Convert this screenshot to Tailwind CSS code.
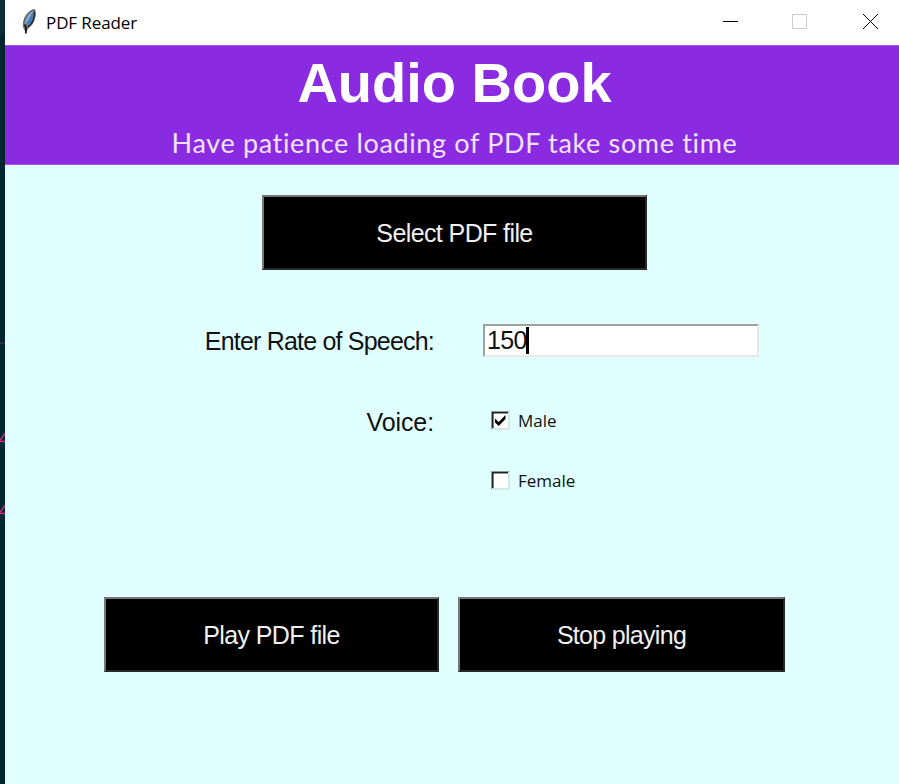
<!DOCTYPE html>
<html lang="en">
<head>
<meta charset="utf-8">
<title>PDF Reader</title>
<script src="https://cdn.jsdelivr.net/npm/@tailwindcss/browser@4"></script>
</head>
<body class="flex h-[784px] w-[899px] overflow-hidden bg-[#e0ffff] font-['Liberation_Sans',Arial,sans-serif] text-[#111]">
<aside class="h-full w-[5px] shrink-0 bg-[#00262f]">
  <svg class="block" width="5" height="784" viewBox="0 0 5 784" fill="none">
    <rect width="5" height="33" fill="#0b2f38"/>
    <path d="M0 343h5" stroke="#302a42" stroke-width="2"/>
    <path d="M5 433.500L0 440.500M0 441.500h5M5 505.500L0 512.500M0 513.500h5" stroke="#c5317c" stroke-width="1.500"/>
  </svg>
</aside>
<main class="flex h-full w-[894px] flex-col">
  <header class="flex h-[45px] shrink-0 items-center bg-white pl-4">
    <svg class="mb-[2px] shrink-0" width="18" height="28" viewBox="0 0 18 28">
      <path d="M13.500 1.500C9 2 4.500 6.500 3 12c-1 3.500-1 6 0 8.500L5 23.500l2-3.500c4-2 6.500-7 7.200-12 .4-3 .2-5-.7-6.500z" fill="#75716c" stroke="#4b4b4b" stroke-width=".7"/>
      <path d="M12.500 3C8 5 5 9.500 4.200 14L4 18C6.500 14 9 9 12.500 3z" fill="#79aee0"/>
      <path d="M13 4.500C9.500 8 7 13 5.300 18.500c4-2 7.500-7.500 7.700-14z" fill="#3d7fc9"/>
      <path d="M13.200 3.500c1 6-2 12.500-6.200 15.500" fill="none" stroke="#222" stroke-width="1.200"/>
      <path d="M3.600 16.500l1.500 3.500-.3 5.500" fill="none" stroke="#151515" stroke-width="1.800"/>
    </svg>
    <h1 class="ml-[7px] w-[600px] whitespace-nowrap font-['Open_Sans','Noto_Sans',sans-serif] text-[17px] leading-[24px] tracking-[-0.1px] text-black">PDF Reader</h1>
    <svg class="ml-auto shrink-0" width="180" height="45" viewBox="0 0 180 45" fill="none" shape-rendering="crispEdges">
      <path d="M4 21.500h15" stroke="#000"/>
      <rect x="73.500" y="14.500" width="14" height="14" stroke="#ccc"/>
      <path d="M144 14l15 15M159 14l-15 15" stroke="#000" shape-rendering="auto"/>
    </svg>
  </header>
  <section class="flex h-[120px] shrink-0 flex-col items-center border-y border-[#a354e5] bg-[#8a2be2] pl-[5px] text-white">
    <h2 class="mt-[5px] h-[64px] whitespace-nowrap text-[56px] leading-[64px] font-bold">Audio Book</h2>
    <p class="mt-[9px] whitespace-nowrap font-['Lato','Noto_Sans',sans-serif] text-[27px] leading-[38px] tracking-[0.65px] text-[#f0e2fb]">Have patience loading of PDF take some time</p>
  </section>
  <section class="flex flex-col pt-[30px]">
    <button class="ml-[257px] h-[75px] w-[385px] border-2 border-t-[#777] border-r-[#292929] border-b-[#292929] border-l-[#777] bg-black pt-[2px] text-[25px] tracking-[-0.6px] whitespace-nowrap text-[#f0f0f0]">Select PDF file</button>
    <div class="mt-[54px] grid grid-cols-[429px_276px] items-center gap-x-[49px]">
      <label for="rate" class="text-right text-[25px] leading-[32px] tracking-[-0.8px] whitespace-nowrap">Enter Rate of Speech:</label>
      <div id="rate" class="flex h-[33px] items-center border-2 border-t-[#a0a0a0] border-r-[#e8e8e8] border-b-[#e8e8e8] border-l-[#a0a0a0] bg-white pl-[2px] text-[25px] tracking-[-0.7px]"><span class="pt-px">150</span><span class="-ml-px h-[27px] w-[3px] bg-black"></span></div>
    </div>
    <div class="mt-[34px] grid grid-cols-[429px_276px] gap-x-[57px]">
      <span class="pt-[15px] text-right text-[25px] leading-[32px] tracking-[-0.1px]">Voice:</span>
      <div class="flex flex-col">
        <label class="flex h-[60px] items-center gap-[8px] font-['Open_Sans','Noto_Sans',sans-serif] text-[17px] leading-[24px] tracking-[0px]">
          <svg class="mb-px" width="19" height="19" viewBox="0 0 19 19" fill="none"><path d="M0 0h19v19H0z" fill="#d2e9e9"/><path d="M2 2h15v15H2z" fill="#fff"/><path d="M.5 18V.5H18" stroke="#8b9999"/><path d="M1.800 17V1.800H17" stroke="#222" stroke-width="1.600"/><path d="M4 7.500l3.700 3.500L14.500 4v4L7.700 15 4 11.500z" fill="#000"/></svg>
          <span>Male</span>
        </label>
        <label class="flex h-[60px] items-center gap-[8px] font-['Open_Sans','Noto_Sans',sans-serif] text-[17px] leading-[24px] tracking-[0px]">
          <svg class="mb-px" width="19" height="19" viewBox="0 0 19 19" fill="none"><path d="M0 0h19v19H0z" fill="#d2e9e9"/><path d="M2 2h15v15H2z" fill="#fff"/><path d="M.5 18V.5H18" stroke="#8b9999"/><path d="M1.800 17V1.800H17" stroke="#222" stroke-width="1.600"/></svg>
          <span>Female</span>
        </label>
      </div>
    </div>
    <div class="mt-[86px] ml-[99px] flex gap-[19px]">
      <button class="h-[75px] w-[335px] border-2 border-t-[#777] border-r-[#292929] border-b-[#292929] border-l-[#777] bg-black pt-[2px] text-[25px] tracking-[-0.6px] whitespace-nowrap text-[#f0f0f0]">Play PDF file</button>
      <button class="h-[75px] w-[327px] border-2 border-t-[#777] border-r-[#292929] border-b-[#292929] border-l-[#777] bg-black pt-[2px] text-[25px] tracking-[-0.7px] whitespace-nowrap text-[#f0f0f0]">Stop playing</button>
    </div>
  </section>
</main>
</body>
</html>
